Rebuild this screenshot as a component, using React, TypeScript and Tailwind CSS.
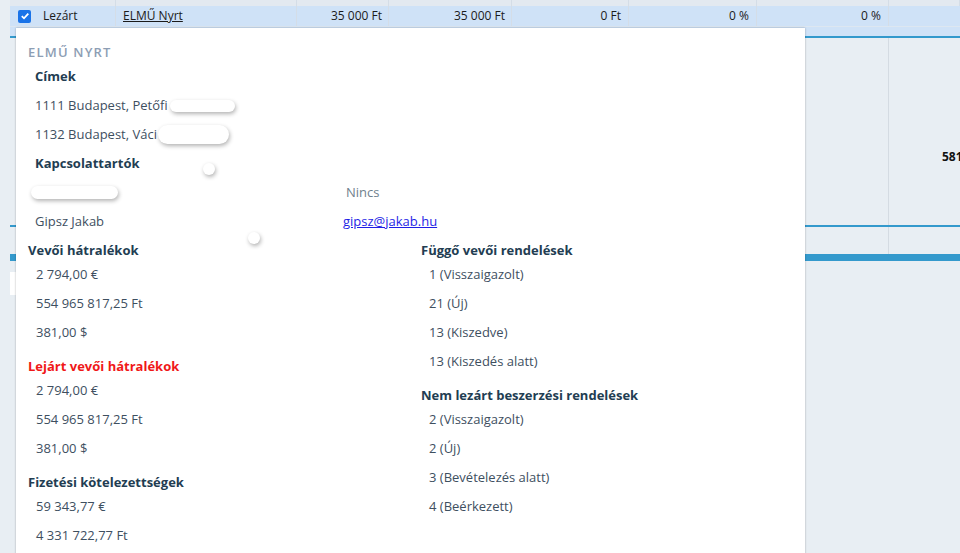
const cols = 'grid grid-cols-[106px_181px_92px_123px_117px_128px_132px_1fr]';

const Pill = ({ className }: { className: string }) => (
  <span className={'inline-block rounded-full bg-white shadow-[1px_2px_4px_rgba(0,0,0,0.3)] ' + className} />
);

function Group({ title, items, red, first }: { title: string; items: string[]; red?: boolean; first?: boolean }) {
  return (
    <div className={first ? '' : 'mt-[11px]'}>
      <div className={'h-[18px] flex items-center text-[13px] font-bold ' + (red ? 'text-[#f01818]' : 'text-[#223d52]')}>
        {title}
      </div>
      {items.map((v) => (
        <div key={v} className="h-[29px] flex items-center pl-[8px] text-[13px] text-[#3e4f5f]">
          {v}
        </div>
      ))}
    </div>
  );
}

export default function App() {
  return (
    <div className="relative h-[553px] w-[960px] overflow-hidden bg-[#e8eef3] font-['Open_Sans',sans-serif]">
      {/* table behind the popup */}
      <div className="ml-[10px]">
        <div className={cols + ' h-[6px] bg-[#e3e9f0]'}>
          {Array.from({ length: 8 }).map((_, i) => (
            <div key={i} className="border-r border-[#d4dde7]" />
          ))}
        </div>
        <div className="h-[30px] bg-[#cfe2f7]">
          <div className={cols + ' h-[21px] text-[12px] text-[#1b1b1b] border-b border-[#dde7f1]'}>
            <div className="flex items-center gap-[12px] pl-[8px] border-r border-[#d4dde7]">
              <span className="flex h-[13px] w-[13px] items-center justify-center rounded-[2px] bg-[#1a73e8]">
                <svg width="10" height="10" viewBox="0 0 10 10">
                  <path d="M1.8 5.2 L4 7.3 L8.3 2.6" fill="none" stroke="white" strokeWidth="1.8" />
                </svg>
              </span>
              <span>Lezárt</span>
            </div>
            <div className="flex items-center pl-[7px] border-r border-[#d4dde7]">
              <span className="underline">ELMŰ Nyrt</span>
            </div>
            <div className="flex items-center justify-end pr-[6px] border-r border-[#d4dde7]">35 000 Ft</div>
            <div className="flex items-center justify-end pr-[6px] border-r border-[#d4dde7]">35 000 Ft</div>
            <div className="flex items-center justify-end pr-[7px] border-r border-[#d4dde7]">0 Ft</div>
            <div className="flex items-center justify-end pr-[7px] border-r border-[#d4dde7]">0 %</div>
            <div className="flex items-center justify-end pr-[7px] border-r border-[#d4dde7]">0 %</div>
            <div />
          </div>
        </div>
        <div className="grid grid-cols-[879px_1fr] h-[189px] border-t-2 border-[#3399cc]">
          <div className="border-r border-[#d4dbe2]" />
          <div className="pt-[110px] pl-[53px] text-[12px] font-bold text-[#111] whitespace-nowrap">581</div>
        </div>
        <div className="grid grid-cols-[879px_1fr] h-[29px] border-t-2 border-[#3399cc]">
          <div className="border-r border-[#d4dbe2]" />
          <div />
        </div>
        <div className="h-[7px] bg-[#3399cc]" />
        <div className="mt-[11px] h-[23px] w-[220px] bg-white" />
      </div>

      {/* customer popup */}
      <div className="absolute left-[16px] top-[28px] h-[540px] w-[789px] bg-white pl-[12px] pt-[14px] shadow-[0_0_2px_rgba(0,0,0,0.3)]">
        <div className="h-[21px] flex items-center text-[13px] font-semibold tracking-[1.2px] text-[#8d9eb4]">ELMŰ NYRT</div>
        <div className="pl-[7px] text-[13px]">
          <div className="h-[28px] flex items-center font-bold text-[#223d52]">Címek</div>
          <div className="h-[29px] flex items-center text-[#3e4f5f]">
            1111 Budapest, Petőfi
            <Pill className="ml-[2px] h-[12px] w-[65px]" />
          </div>
          <div className="h-[29px] flex items-center text-[#3e4f5f]">
            1132 Budapest, Váci
            <Pill className="ml-[1px] h-[19px] w-[71px]" />
          </div>
          <div className="h-[29px] flex items-center font-bold text-[#223d52]">Kapcsolattartók</div>
        </div>
        <div className="grid grid-cols-[312px_1fr] pl-[3px] text-[13px]">
          <div className="h-[29px] flex items-center">
            <Pill className="h-[13px] w-[87px]" />
          </div>
          <div className="h-[29px] flex items-center pl-[3px] text-[#6f7f8d]">Nincs</div>
          <div className="h-[29px] flex items-center pl-[4px] text-[#3e4f5f]">Gipsz Jakab</div>
          <div className="h-[29px] flex items-center">
            <a href="#" className="text-[#1f1fe6] underline">gipsz@jakab.hu</a>
          </div>
        </div>

        <div className="mt-[6px] grid grid-cols-[393px_1fr]">
          <div>
            <Group first title="Vevői hátralékok" items={['2 794,00 €', '554 965 817,25 Ft', '381,00 $']} />
            <Group red title="Lejárt vevői hátralékok" items={['2 794,00 € ', '554 965 817,25 Ft ', '381,00 $ ']} />
            <Group title="Fizetési kötelezettségek" items={['59 343,77 €', '4 331 722,77 Ft']} />
          </div>
          <div>
            <Group
              first
              title="Függő vevői rendelések"
              items={['1 (Visszaigazolt)', '21 (Új)', '13 (Kiszedve)', '13 (Kiszedés alatt)']}
            />
            <Group
              title="Nem lezárt beszerzési rendelések"
              items={['2 (Visszaigazolt)', '2 (Új)', '3 (Bevételezés alatt)', '4 (Beérkezett)']}
            />
          </div>
        </div>

        <span className="absolute left-[187px] top-[135px] h-[12px] w-[12px] rounded-full bg-white shadow-[1px_2px_4px_rgba(0,0,0,0.3)]" />
        <span className="absolute left-[232px] top-[204px] h-[12px] w-[12px] rounded-full bg-white shadow-[1px_2px_4px_rgba(0,0,0,0.3)]" />
      </div>
    </div>
  );
}
